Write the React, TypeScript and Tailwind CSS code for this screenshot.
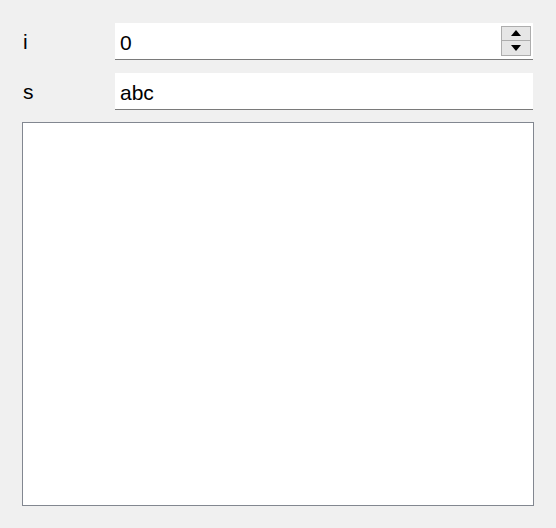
import React from "react";

export default function App() {
  const font = { fontFamily: '"Liberation Sans", Arial, sans-serif' };
  return (
    <div
      className="w-[556px] h-[528px] bg-[#f0f0f0] flex flex-col pt-[23px] pl-[22px] pr-[22px] text-black"
      style={font}
    >
      <div className="flex items-center h-[37px]">
        <div className="w-[93px] pl-[1px] text-[21px] leading-none">i</div>
        <div className="w-[418px] h-[37px] bg-white border-b border-[#7a7a7a] flex items-center pl-[5px] pr-[2px]">
          <span className="flex-1 text-[21px] leading-none pt-[3px]">0</span>
          <div className="w-[30px] h-[30px] border border-[#adadad] bg-[#e6e6e6] flex flex-col mb-[1px]">
            <div className="flex-1 flex items-center justify-center border-b border-[#adadad]">
              <svg width="10" height="6" viewBox="0 0 10 6">
                <polygon points="5,0 10,6 0,6" fill="#000" />
              </svg>
            </div>
            <div className="flex-1 flex items-center justify-center">
              <svg width="10" height="6" viewBox="0 0 10 6">
                <polygon points="0,0 10,0 5,6" fill="#000" />
              </svg>
            </div>
          </div>
        </div>
      </div>
      <div className="flex items-center h-[37px] mt-[13px]">
        <div className="w-[93px] pl-[1px] text-[21px] leading-none">s</div>
        <div className="w-[418px] h-[37px] bg-white border-b border-[#7a7a7a] flex items-center pl-[5px]">
          <span className="text-[21px] leading-none pt-[3px]">abc</span>
        </div>
      </div>
      <div className="mt-[12px] w-[512px] h-[384px] bg-white border border-[#828790]" />
    </div>
  );
}
